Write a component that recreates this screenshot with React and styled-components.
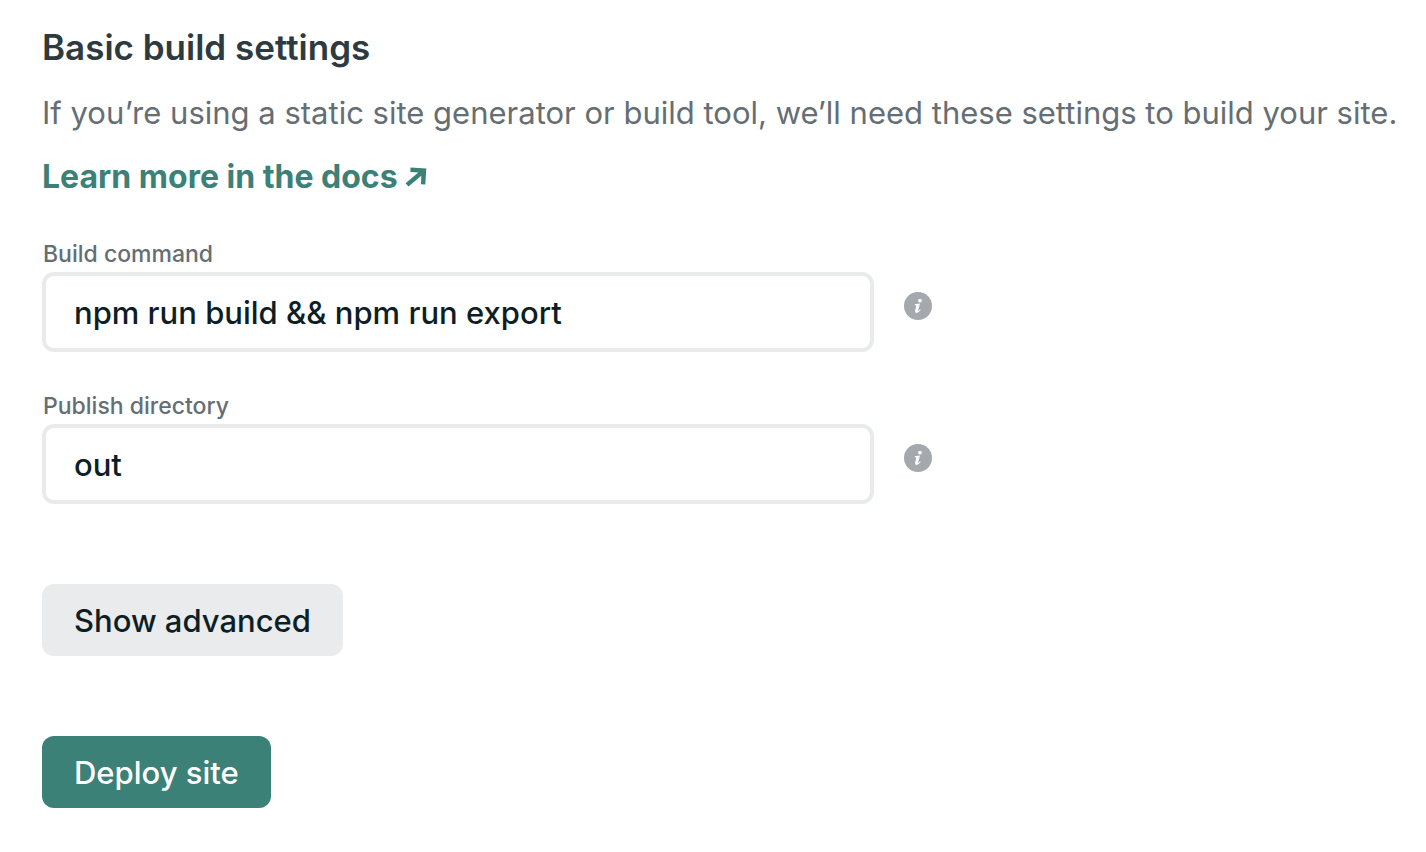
import React, { useState } from "react";
import styled, { createGlobalStyle } from "styled-components";

const GlobalStyle = createGlobalStyle`
  *, *::before, *::after { box-sizing: border-box; }
  body {
    margin: 0;
    background: #fff;
    color: #0e1e25;
    font-family: Inter, "Liberation Sans", sans-serif;
    font-size: 31px;
    line-height: 48px;
  }
`;

const Section = styled.main`
  padding: 23px 24px 44px 42px;
`;

const Title = styled.h2`
  margin: 0 0 18px;
  font-size: 35px;
  line-height: 48px;
  font-weight: 600;
  color: #2d3b41;
`;

const Text = styled.p`
  margin: 0 0 16px;
  color: #646e73;
`;

const DocsLink = styled.a`
  display: inline-flex;
  align-items: center;
  gap: 7px;
  color: #3c8178;
  font-size: 32px;
  font-weight: 700;
  text-decoration: none;
`;

const Form = styled.form`
  display: flex;
  flex-direction: column;
  align-items: flex-start;
  margin-top: 35px;
`;

const Field = styled.div`
  width: 100%;
  margin-bottom: 36px;
`;

const Label = styled.label`
  display: block;
  padding-left: 1px;
  font-size: 23px;
  line-height: 36px;
  font-weight: 500;
  color: #646e73;
`;

const InputRow = styled.div`
  display: flex;
  align-items: flex-start;
  gap: 30px;
`;

const Input = styled.input`
  width: 832px;
  min-width: 0;
  height: 80px;
  padding: 0 28px;
  border: 4px solid #e9ebeb;
  border-radius: 12px;
  background: #fff;
  color: #0e1e25;
  font: inherit;
  font-weight: 500;
`;

const InfoButton = styled.button`
  display: flex;
  flex: none;
  margin: 20px 0 0;
  padding: 0;
  border: 0;
  background: none;
`;

const Button = styled.button`
  height: 72px;
  margin-top: ${(p) => p.$gap}px;
  padding: 2px 32px 0;
  border: 0;
  border-radius: 12px;
  background: ${(p) => (p.$primary ? "#3c8178" : "#e9ebed")};
  color: ${(p) => (p.$primary ? "#fff" : "#0e1e25")};
  font: inherit;
  font-weight: 500;
`;

function ArrowIcon() {
  return (
    <svg width="22" height="22" viewBox="0 0 22 22" fill="currentColor" aria-hidden="true">
      <path d="M5.5 1.500L21.300 2.500 20.300 18.500 16 18.200 16.300 9.800 3.500 20.500 0.600 17.200 13.300 6.500 5.300 6Z" />
    </svg>
  );
}

function InfoIcon() {
  return (
    <svg width="28" height="28" viewBox="0 0 28 28" aria-hidden="true">
      <circle cx="14" cy="14" r="14" fill="#a3a9ac" />
      <circle cx="16" cy="8.600" r="1.900" fill="#fff" />
      <path d="M10.800 12.200L16 11.500 14.200 18.300Q14.100 19 14.700 18.700L16 17.300 16.700 17.800Q14.700 21 12.500 20.900 10.600 20.700 11.100 18.500L12.400 13.500 10.700 13.200Z" fill="#fff" />
    </svg>
  );
}

function TextField({ id, label, initial }) {
  const [value, setValue] = useState(initial);
  return (
    <Field>
      <Label htmlFor={id}>{label}</Label>
      <InputRow>
        <Input id={id} type="text" value={value} onChange={(e) => setValue(e.target.value)} />
        <InfoButton type="button" aria-label={"About " + label}>
          <InfoIcon />
        </InfoButton>
      </InputRow>
    </Field>
  );
}

export default function App() {
  return (
    <>
      <GlobalStyle />
      <Section>
        <Title>Basic build settings</Title>
        <Text>If you’re using a static site generator or build tool, we’ll need these settings to build your site.</Text>
        <DocsLink href="#docs">
          Learn more in the docs
          <ArrowIcon />
        </DocsLink>
        <Form onSubmit={(e) => e.preventDefault()}>
          <TextField id="command" label="Build command" initial="npm run build && npm run export" />
          <TextField id="directory" label="Publish directory" initial="out" />
          <Button type="button" $gap={44}>Show advanced</Button>
          <Button type="submit" $primary $gap={80}>Deploy site</Button>
        </Form>
      </Section>
    </>
  );
}
